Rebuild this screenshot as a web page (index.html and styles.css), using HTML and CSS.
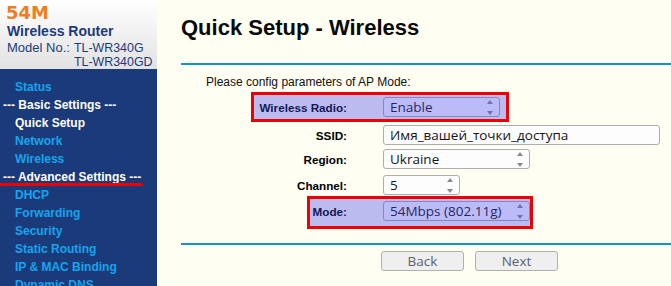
FILE: index.html
```html
<!DOCTYPE html>
<html>
<head>
<meta charset="utf-8">
<link rel="stylesheet" href="styles.css">
</head>
<body>
<div class="page">
  <aside class="side">
    <div class="brand">
      <div class="b-54">54M</div>
      <div class="b-name">Wireless Router</div>
      <div class="b-model">
        <span class="b-lbl">Model No.:</span>
        <span class="b-nums">TL-WR340G<br>TL-WR340GD</span>
      </div>
    </div>
    <nav class="menu">
      <a class="item">Status</a>
      <div class="head">--- Basic Settings ---</div>
      <a class="item cur">Quick Setup</a>
      <a class="item">Network</a>
      <a class="item">Wireless</a>
      <div class="head marked">--- Advanced Settings ---</div>
      <a class="item">DHCP</a>
      <a class="item">Forwarding</a>
      <a class="item">Security</a>
      <a class="item">Static Routing</a>
      <a class="item">IP &amp; MAC Binding</a>
      <a class="item">Dynamic DNS</a>
    </nav>
  </aside>
  <main class="main">
    <h1 class="title">Quick Setup - Wireless</h1>
    <div class="rule"></div>
    <p class="intro">Please config parameters of AP Mode:</p>
    <div class="form">
      <div class="row r1">
        <span class="lbl">Wireless Radio:</span>
        <div class="sel w-enable"><span>Enable</span><svg class="spin" width="6" height="15" viewBox="0 0 6 15"><path d="M3 0 L6 4 L0 4 Z M3 15 L6 11 L0 11 Z" fill="#8a8a8a"/></svg></div>
        <div class="hl hl-radio"></div>
      </div>
      <div class="row r2">
        <span class="lbl">SSID:</span>
        <div class="sel w-ssid"><span>Имя_вашей_точки_доступа</span></div>
      </div>
      <div class="row r3">
        <span class="lbl">Region:</span>
        <div class="sel w-region"><span>Ukraine</span><svg class="spin" width="6" height="15" viewBox="0 0 6 15"><path d="M3 0 L6 4 L0 4 Z M3 15 L6 11 L0 11 Z" fill="#8a8a8a"/></svg></div>
      </div>
      <div class="row r4">
        <span class="lbl">Channel:</span>
        <div class="sel w-channel"><span>5</span><svg class="spin" width="6" height="15" viewBox="0 0 6 15"><path d="M3 0 L6 4 L0 4 Z M3 15 L6 11 L0 11 Z" fill="#8a8a8a"/></svg></div>
      </div>
      <div class="row r5">
        <span class="lbl">Mode:</span>
        <div class="sel w-mode"><span>54Mbps (802.11g)</span><svg class="spin" width="6" height="15" viewBox="0 0 6 15"><path d="M3 0 L6 4 L0 4 Z M3 15 L6 11 L0 11 Z" fill="#8a8a8a"/></svg></div>
        <div class="hl hl-mode"></div>
      </div>
    </div>
    <div class="rule rule-bottom"></div>
    <div class="buttons">
      <button class="btn">Back</button>
      <button class="btn">Next</button>
    </div>
  </main>
</div>
</body>
</html>
```
FILE: styles.css
```css
html, body {
  margin: 0;
  padding: 0;
}
body {
  width: 671px;
  height: 286px;
  overflow: hidden;
  background: #fefef3;
  font-family: "Liberation Sans", Arial, sans-serif;
}
.page {
  display: flex;
  height: 286px;
  overflow: hidden;
}
.side {
  width: 157px;
  flex: none;
  display: flex;
  flex-direction: column;
}
.brand {
  height: 71px;
  box-sizing: border-box;
  padding: 3px 0 0 6px;
  background: linear-gradient(#ffffff, #e2e2e2);
  color: #1c3a7a;
}
.b-54 {
  font-family: "DejaVu Sans", sans-serif;
  font-weight: bold;
  font-size: 18px;
  line-height: 20px;
  color: #ef7d22;
}
.b-name {
  font-weight: bold;
  font-size: 14px;
  line-height: 16px;
  padding-left: 1px;
}
.b-model {
  display: flex;
  margin-top: 2px;
  padding-left: 1px;
  font-size: 13px;
  line-height: 14px;
}
.b-lbl {
  width: 67px;
  flex: none;
}
.b-nums {
  font-size: 12.4px;
}
.menu {
  flex: 1;
  background: #1b3a7a;
  padding-top: 9px;
  display: flex;
  flex-direction: column;
  font-weight: bold;
  font-size: 12px;
  line-height: 18px;
}
.item {
  padding-left: 15px;
  color: #12a6ee;
  white-space: nowrap;
}
.item.cur {
  color: #ffffff;
}
.head {
  padding-left: 3px;
  color: #ffffff;
  white-space: nowrap;
}
.marked {
  position: relative;
}
.marked::after {
  content: "";
  position: absolute;
  left: -1px;
  top: 15px;
  width: 144px;
  height: 3px;
  background: #ee0000;
  border-radius: 2px;
}
.main {
  flex: 1;
  padding-left: 24px;
  background: #fefef3;
}
.title {
  margin: 15px 0 0;
  font-size: 22px;
  line-height: 26px;
  font-weight: bold;
  color: #0a0a0a;
}
.rule {
  margin-top: 22px;
  height: 2px;
  background: #0f95c8;
}
.intro {
  margin: 10px 0 0 25px;
  font-size: 12px;
  line-height: 14px;
  color: #111;
}
.form {
  display: flex;
  flex-direction: column;
  margin-top: 8px;
}
.row {
  position: relative;
  display: flex;
  align-items: center;
  height: 20px;
}
.r2 { margin-top: 8px; }
.r3 { margin-top: 4px; }
.r4 { margin-top: 6px; }
.r5 { margin-top: 6px; }
.lbl {
  width: 166px;
  flex: none;
  text-align: right;
  margin-right: 36px;
  font-weight: bold;
  font-size: 11.7px;
  color: #000;
  white-space: nowrap;
}
.sel {
  box-sizing: border-box;
  height: 20px;
  display: flex;
  align-items: center;
  justify-content: space-between;
  padding: 0 6px;
  border: 1px solid #adadad;
  border-radius: 3px;
  background: #fdfdfd;
  font-family: "Open Sans", "Noto Sans", sans-serif;
  font-size: 13.5px;
  color: #151515;
  white-space: nowrap;
}
.sel span {
  line-height: 18px;
}
.spin {
  flex: none;
}
.w-enable { width: 117px; }
.w-ssid { width: 277px; }
.w-region { width: 147px; }
.w-channel { width: 77px; }
.w-mode { width: 147px; }
.hl {
  position: absolute;
  box-sizing: border-box;
  border: 3px solid #ee0000;
  background: rgba(64, 64, 236, 0.35);
}
.hl-radio {
  left: 70px;
  top: -5px;
  width: 258px;
  height: 30px;
}
.hl-mode {
  left: 126px;
  top: -5px;
  width: 226px;
  height: 33px;
}
.rule-bottom {
  margin-top: 22px;
}
.buttons {
  display: flex;
  gap: 11px;
  margin: 6px 0 0 200px;
}
.btn {
  box-sizing: border-box;
  width: 83px;
  height: 20px;
  padding: 0;
  border: 1px solid #b0b0b0;
  border-radius: 3px;
  background: #efefef;
  font-family: "Open Sans", "Noto Sans", sans-serif;
  font-size: 13.5px;
  line-height: 18px;
  color: #5b6070;
}
```
